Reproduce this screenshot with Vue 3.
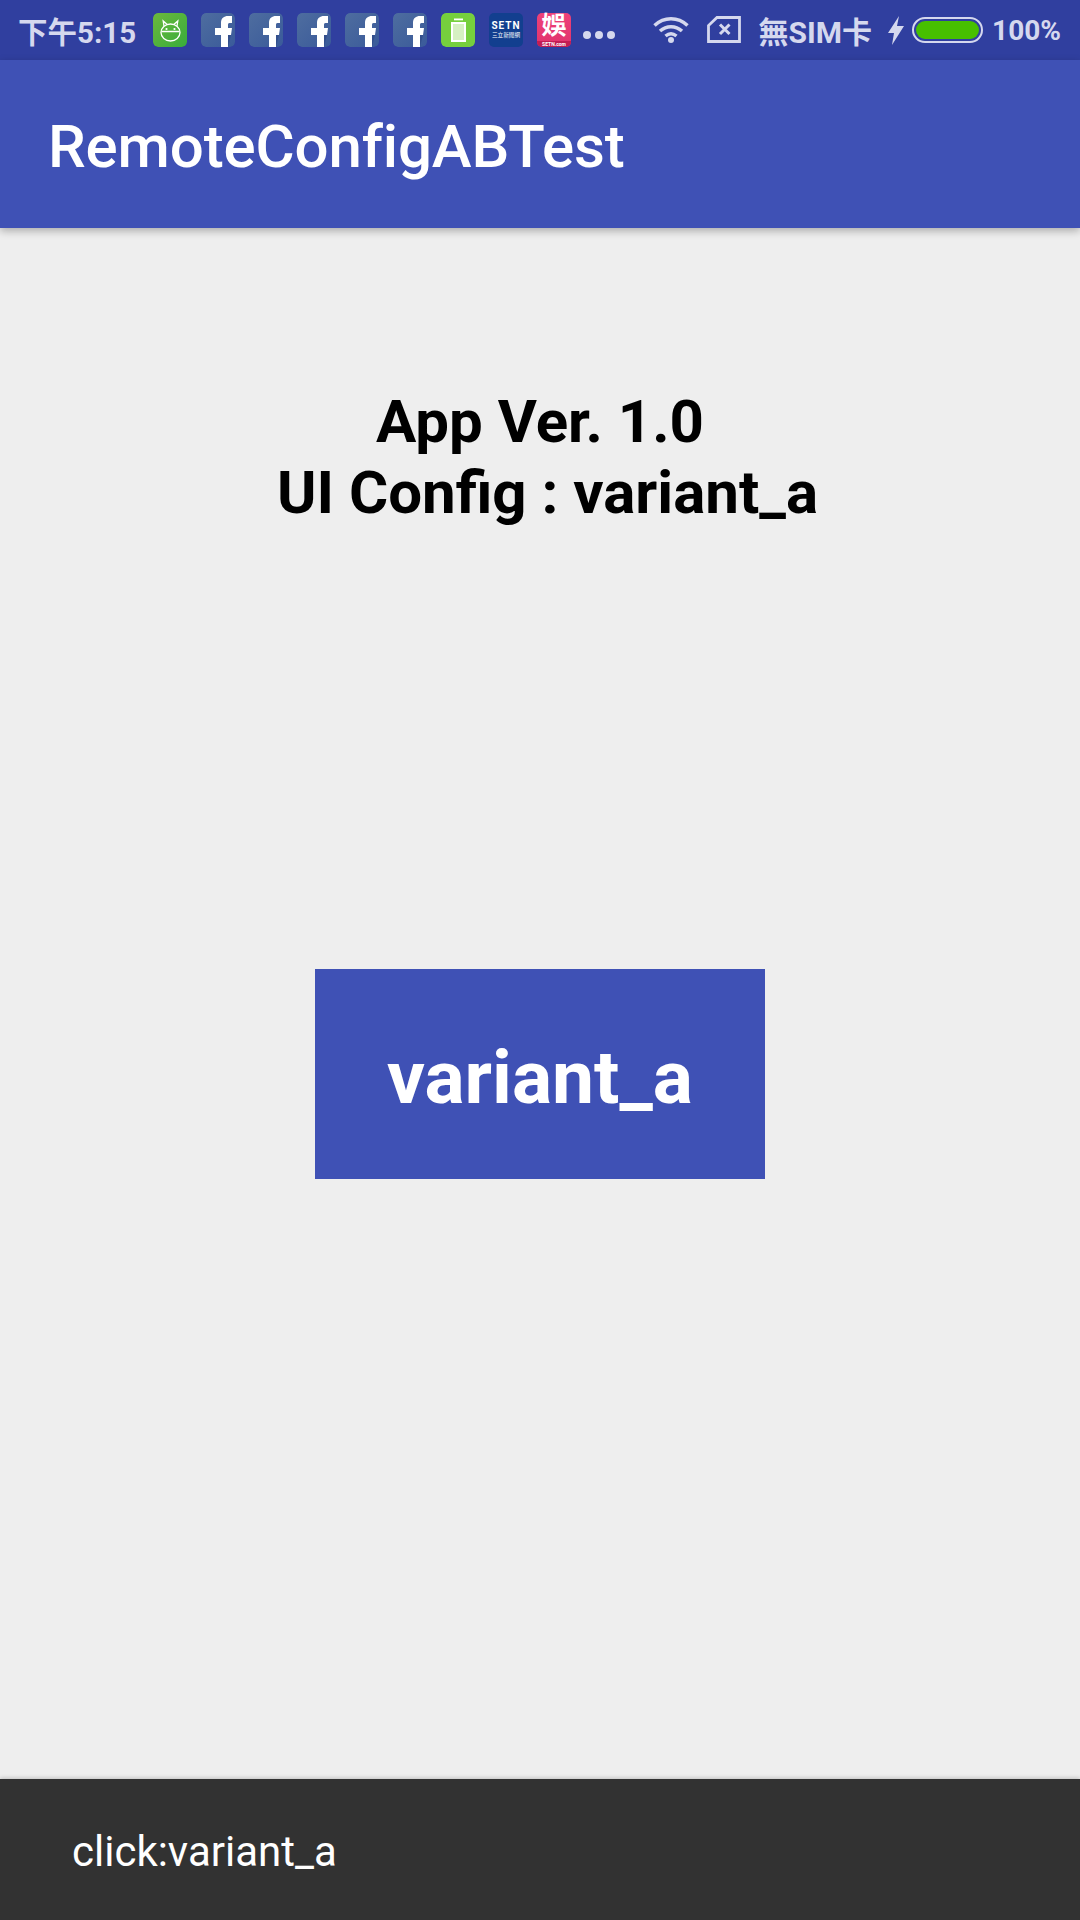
<template>
  <div class="screen">
    <div class="status-bar">
      <div class="status-left">
        <span class="time">下午5:15</span>
        <div class="notif-icons">
          <svg class="notif" viewBox="0 0 34 34">
            <defs>
              <linearGradient id="droid" x1="0" y1="0" x2="1" y2="1">
                <stop offset="0" stop-color="#6cb83c" />
                <stop offset="1" stop-color="#38ad3c" />
              </linearGradient>
            </defs>
            <rect width="34" height="34" rx="5" fill="url(#droid)" />
            <g fill="none" stroke="#fff" stroke-width="1.3">
              <ellipse cx="17.500" cy="19.500" rx="9.500" ry="8.500" />
              <path d="M8.500 18.500h18" />
              <path d="M11 13l-0.800-5 4 3.500 M24 13l0.800-5-4 3.500" />
            </g>
            <circle cx="13.500" cy="16" r="1.100" fill="#fff" />
            <circle cx="21.500" cy="16" r="1.100" fill="#fff" />
          </svg>
          <svg v-for="n in 5" :key="n" class="notif" viewBox="0 0 34 34">
            <defs>
              <linearGradient :id="'fb' + n" x1="0" y1="0" x2="1" y2="1">
                <stop offset="0" stop-color="#4e6d9f" />
                <stop offset="1" stop-color="#3a5a9a" />
              </linearGradient>
            </defs>
            <rect width="34" height="34" rx="5" :fill="'url(#fb' + n + ')'" />
            <path d="M27 34l3-12h-3z" fill="#334f8c" />
            <path d="M20 34V22h-6v-7h6v-5c0-5 3-7 7-7h4v7h-2.500c-1.200 0-1.500 0.800-1.500 2v3h4l-1 7h-3v12z" fill="#fff" />
          </svg>
          <svg class="notif" viewBox="0 0 34 34">
            <rect width="34" height="34" rx="5" fill="#76cf3d" />
            <rect x="11" y="10" width="13" height="18" fill="#d6f0c2" stroke="#fff" stroke-width="2" />
            <rect x="13" y="5.500" width="9" height="1.800" fill="#fff" />
          </svg>
          <div class="notif setn">
            <span class="setn-logo">SETN</span>
            <span class="setn-sub">三立新聞網</span>
          </div>
          <div class="notif yule">
            <span class="yule-char">娛</span>
            <span class="yule-foot">SETN.com</span>
          </div>
          <div class="more"><i></i><i></i><i></i></div>
        </div>
      </div>
      <div class="status-right">
        <svg class="wifi" viewBox="0 0 36 27" fill="none" stroke="#d5d8ee" stroke-width="3.500">
          <path d="M1.500 9.500C11 0.500 25 0.500 34.500 9.500" />
          <path d="M7 15c6.500-5.800 15.500-5.800 22 0" />
          <path d="M12.500 20c3.500-2.800 7.500-2.800 11 0" />
          <circle cx="18" cy="24" r="3" fill="#d5d8ee" stroke="none" />
        </svg>
        <svg class="nosim" viewBox="0 0 34 27" fill="none" stroke="#d5d8ee" stroke-width="2.800">
          <path d="M10 1.500h22.500v24h-31V9.500z" />
          <path d="M13 8.500l9.500 9.500 M22.500 8.500L13 18" stroke-width="3" />
        </svg>
        <span class="sim">無SIM卡</span>
        <svg class="bolt" viewBox="0 0 16 29">
          <path d="M11 0L0 17h6L4 29 16 10H9z" fill="#d5d8ee" />
        </svg>
        <div class="battery"><div class="battery-fill"></div></div>
        <span class="pct">100%</span>
      </div>
    </div>

    <header class="app-bar">
      <span class="app-title">RemoteConfigABTest</span>
    </header>

    <main class="content">
      <div class="info">
        <div>App Ver. 1.0</div>
        <div>&nbsp;UI Config : variant_a</div>
      </div>
      <button class="variant-btn">variant_a</button>
    </main>

    <footer class="snackbar">click:variant_a</footer>
  </div>
</template>

<script setup>
</script>

<style>
html, body {
  margin: 0;
  background: #eeeeee;
}
</style>

<style scoped>
.screen {
  width: 1080px;
  height: 1920px;
  display: flex;
  flex-direction: column;
  background: #eeeeee;
  font-family: Roboto, "Noto Sans CJK TC", sans-serif;
  overflow: hidden;
}

.status-bar {
  height: 60px;
  flex-shrink: 0;
  background: #303f9f;
  color: #d5d8ee;
  display: flex;
  align-items: center;
  justify-content: space-between;
  padding: 0 19px 0 18px;
  box-sizing: border-box;
  font-weight: 700;
}

.status-left,
.status-right {
  display: flex;
  align-items: center;
}

.time {
  font-size: 29.500px;
  width: 135px;
  white-space: nowrap;
}

.notif-icons {
  display: flex;
  align-items: center;
  gap: 14px;
}

.notif {
  width: 34px;
  height: 34px;
  display: block;
  border-radius: 5px;
}

.setn {
  background: #123f8f;
  color: #fff;
  display: flex;
  flex-direction: column;
  align-items: center;
  justify-content: center;
  line-height: 1;
}

.setn-logo {
  font-size: 10px;
  font-weight: 700;
  letter-spacing: 1px;
}

.setn-sub {
  font-size: 5.600px;
  font-weight: 400;
  margin-top: 2px;
}

.yule {
  background: linear-gradient(#ee4279, #e0336d);
  color: #fff;
  display: flex;
  flex-direction: column;
  align-items: center;
  line-height: 1;
}

.yule-char {
  font-size: 25px;
  font-weight: 700;
  height: 28px;
}

.yule-foot {
  font-size: 5px;
  line-height: 6px;
  width: 100%;
  text-align: center;
  height: 6px;
  background: #c21d54;
  border-radius: 0 0 5px 5px;
}

.more {
  display: flex;
  gap: 4px;
  margin-top: 10px;
  margin-left: -2px;
}

.more i {
  width: 8px;
  height: 8px;
  border-radius: 50%;
  background: #d5d8ee;
}

.wifi {
  width: 36px;
  height: 27px;
  margin-right: 18px;
  margin-top: -1px;
}

.nosim {
  width: 34px;
  height: 27px;
  margin-right: 18px;
  margin-top: -1px;
}

.sim {
  font-size: 30px;
  margin-right: 16px;
  white-space: nowrap;
}

.bolt {
  width: 16px;
  height: 29px;
  margin-right: 8px;
}

.battery {
  width: 71px;
  height: 26px;
  border: 2px solid #d5d8ee;
  border-radius: 13px;
  box-sizing: border-box;
  padding: 2px;
  margin-right: 9px;
}

.battery-fill {
  height: 100%;
  background: #47c000;
  border-radius: 9px;
}

.pct {
  font-size: 28px;
}

.app-bar {
  height: 168px;
  flex-shrink: 0;
  background: #3f51b5;
  display: flex;
  align-items: center;
  padding: 5px 48px 0;
  box-sizing: border-box;
  box-shadow: 0 3px 8px rgba(0, 0, 0, 0.28);
  position: relative;
}

.app-title {
  color: #fff;
  font-size: 60px;
  font-weight: 500;
  letter-spacing: -0.140px;
}

.content {
  flex: 1;
  display: flex;
  flex-direction: column;
  align-items: center;
}

.info {
  margin-top: 158px;
  font-size: 60px;
  font-weight: 700;
  line-height: 71px;
  text-align: center;
  color: #000;
}

.variant-btn {
  margin-top: 441px;
  width: 450px;
  height: 210px;
  background: #3f51b5;
  border: none;
  padding: 5px 0 0;
  color: #fff;
  font-family: inherit;
  font-size: 75px;
  font-weight: 700;
}

.snackbar {
  height: 141px;
  flex-shrink: 0;
  background: #323232;
  color: #fff;
  font-size: 42px;
  display: flex;
  align-items: center;
  padding: 4px 72px 0;
  box-sizing: border-box;
  box-shadow: 0 -1px 4px rgba(0, 0, 0, 0.2);
  position: relative;
}
</style>
